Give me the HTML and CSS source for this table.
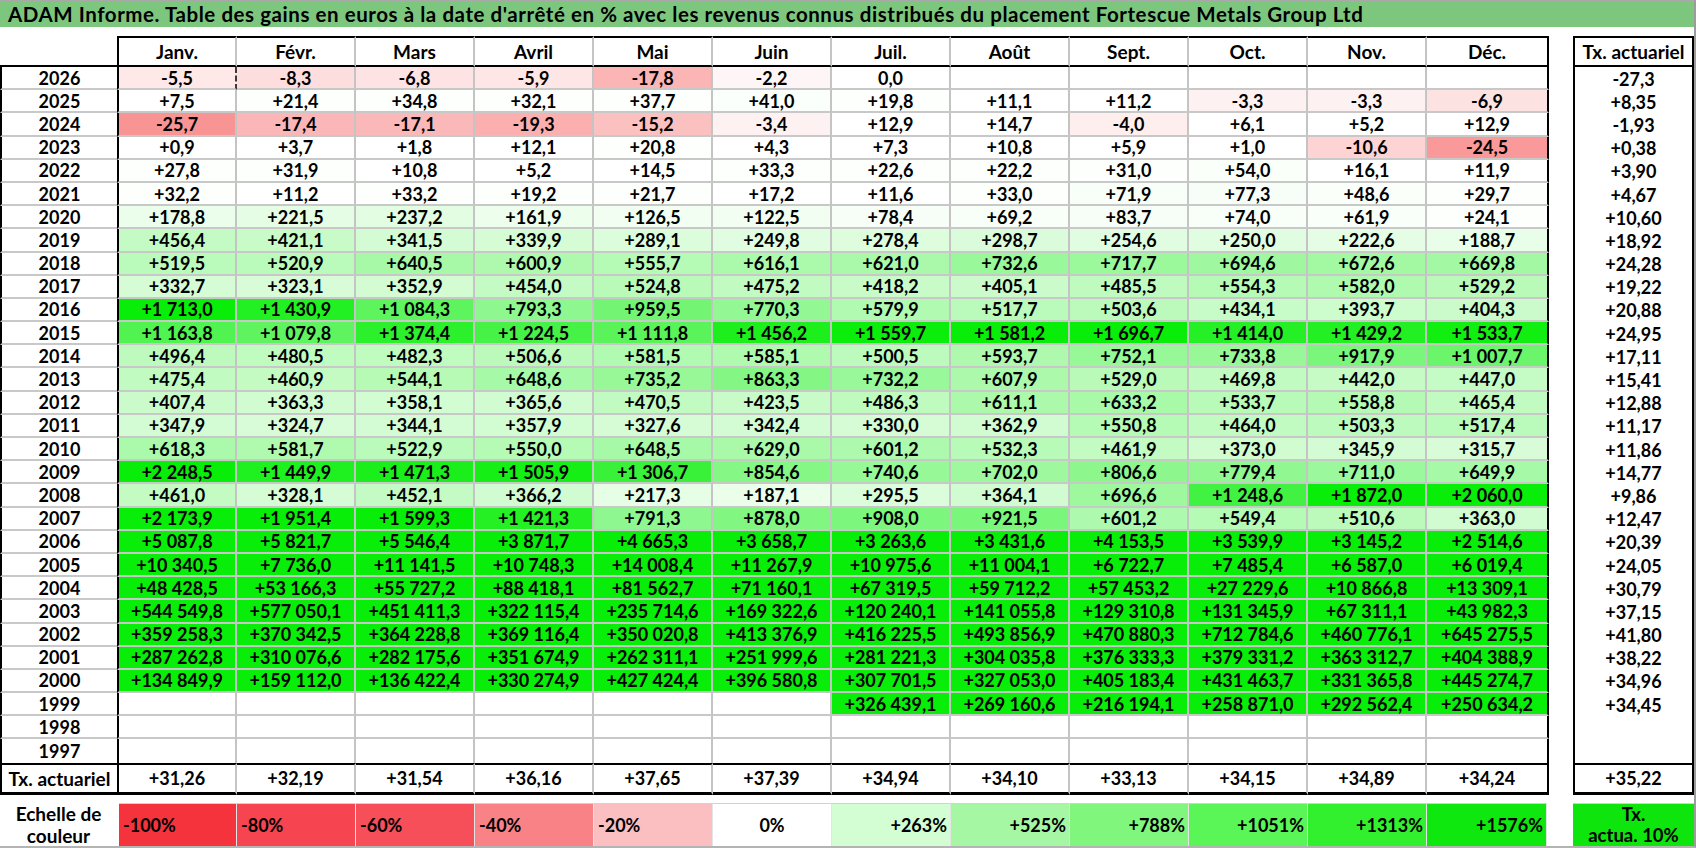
FILE: index.html
```html
<!DOCTYPE html>
<html lang="fr">
<head>
<meta charset="utf-8">
<title>ADAM Informe - Fortescue Metals Group Ltd</title>
<link rel="stylesheet" href="styles.css">
</head>
<body>
<div class="sheet">
  <div class="title">ADAM Informe. Table des gains en euros à la date d'arrêté en % avec les revenus connus distribués du placement Fortescue Metals Group Ltd</div>
  <div class="tables">
    <div class="main" id="main"></div>
    <div class="tx" id="tx"></div>
  </div>
  <div class="scale">
    <div class="scale-label">Echelle de<br>couleur</div>
    <div class="sw neg s1">-100%</div>
    <div class="sw neg s2">-80%</div>
    <div class="sw neg s3">-60%</div>
    <div class="sw neg s4">-40%</div>
    <div class="sw neg s5">-20%</div>
    <div class="sw zero s6">0%</div>
    <div class="sw pos s7">+263%</div>
    <div class="sw pos s8">+525%</div>
    <div class="sw pos s9">+788%</div>
    <div class="sw pos s10">+1051%</div>
    <div class="sw pos s11">+1313%</div>
    <div class="sw pos s12 swlast">+1576%</div>
    <div class="spacer"></div>
    <div class="sw-tx">Tx.<br>actua. 10%</div>
  </div>
</div>
<script src="script.js"></script>
</body>
</html>
```

FILE: styles.css
```css
* { box-sizing: border-box; }
html, body { margin: 0; padding: 0; background: #fff; }
body {
  font-family: Lato, "Open Sans", "Liberation Sans", sans-serif;
  font-weight: 700;
  color: #000;
}
.sheet {
  width: 1696px;
  height: 848px;
  border-top: 1px solid #a8a8a8;
  border-right: 2px solid #9c9c9c;
  border-bottom: 2px solid #b4b4b4;
  overflow: hidden;
}
.title {
  height: 26px;
  background: #7dc67e;
  font-size: 20.5px;
  letter-spacing: 0.56px;
  line-height: 26px;
  padding-left: 8px;
  white-space: nowrap;
}
.tables {
  display: flex;
  gap: 24px;
  margin-top: 9px;
}
.main {
  display: grid;
  grid-template-columns: 117px 120px repeat(10, 119px) 122px;
  grid-template-rows: 31px repeat(30, 23.2px) 32px;
}
.tx {
  display: grid;
  grid-template-columns: 121px;
  grid-template-rows: 31px repeat(30, 23.2px) 32px;
}
.cell {
  display: flex;
  align-items: center;
  justify-content: center;
  white-space: nowrap;
  font-size: 18px;
  background: #fff;
}
.corner { border-bottom: 2px solid #000; }
.hd {
  font-size: 19px;
  border-top: 2px solid #000;
  border-bottom: 2px solid #000;
  border-right: 2px solid #c4c4c4;
}
.first { border-left: 2px solid #000; }
.main .last { border-right: 2px solid #000; }
.yr {
  border-left: 2px solid #000;
  border-bottom: 2px solid #c8c8c8;
}
.c {
  border-right: 2px solid #c4c4c4;
  border-bottom: 2px solid #c8c8c8;
}
.main .pagebreak { border-right: 2px dashed #3a3a3a; }
.lastrow { border-bottom: none; }
.tot {
  border-top: 2px solid #000;
  border-bottom: 3px solid #000;
}
.yr.tot { font-size: 19px; border-bottom: 3px solid #000; }
.txc {
  border-left: 2px solid #000;
  border-right: 2px solid #000;
}
.txc.hd { border-top: 2px solid #000; border-bottom: 2px solid #000; }
.scale {
  display: grid;
  grid-template-columns: 117px 120px repeat(10, 119px) 122px 24px 121px;
  height: 43px;
  margin-top: 8px;
}
.scale-label {
  display: flex;
  align-items: center;
  justify-content: center;
  text-align: center;
  font-size: 19px;
  line-height: 22px;
}
.sw {
  display: flex;
  align-items: center;
  font-size: 18px;
  border-top: 1px solid #d2d2d2;
  border-right: 1px solid #e4e4e4;
  white-space: nowrap;
}
.s1 { margin-left: 2px; }
.neg { justify-content: flex-start; padding-left: 4px; }
.zero { justify-content: center; }
.pos { justify-content: flex-end; padding-right: 3px; }
.swlast { margin-right: 2px; }
.s1 { background: #f5333d; }
.s2 { background: #f64450; }
.s3 { background: #f74f59; }
.s4 { background: #f98287; }
.s5 { background: #fbbfc1; }
.s6 { background: #ffffff; }
.s7 { background: #d3fdd3; }
.s8 { background: #a6f7a3; }
.s9 { background: #80f77c; }
.s10 { background: #5af556; }
.s11 { background: #33f02f; }
.s12 { background: #0ee80e; }
.sw-tx {
  background: #0de50d;
  display: flex;
  align-items: center;
  justify-content: center;
  text-align: center;
  font-size: 18.5px;
  line-height: 21px;
  border-top: 1px solid #d2d2d2;
}
```

FILE: script.js
```js
(function () {
  var months = ["Janv.", "Févr.", "Mars", "Avril", "Mai", "Juin", "Juil.", "Août", "Sept.", "Oct.", "Nov.", "Déc."];
  var rows = [
    ["2026", "-5,5|-8,3|-6,8|-5,9|-17,8|-2,2|0,0|||||", "-27,3"],
    ["2025", "+7,5|+21,4|+34,8|+32,1|+37,7|+41,0|+19,8|+11,1|+11,2|-3,3|-3,3|-6,9", "+8,35"],
    ["2024", "-25,7|-17,4|-17,1|-19,3|-15,2|-3,4|+12,9|+14,7|-4,0|+6,1|+5,2|+12,9", "-1,93"],
    ["2023", "+0,9|+3,7|+1,8|+12,1|+20,8|+4,3|+7,3|+10,8|+5,9|+1,0|-10,6|-24,5", "+0,38"],
    ["2022", "+27,8|+31,9|+10,8|+5,2|+14,5|+33,3|+22,6|+22,2|+31,0|+54,0|+16,1|+11,9", "+3,90"],
    ["2021", "+32,2|+11,2|+33,2|+19,2|+21,7|+17,2|+11,6|+33,0|+71,9|+77,3|+48,6|+29,7", "+4,67"],
    ["2020", "+178,8|+221,5|+237,2|+161,9|+126,5|+122,5|+78,4|+69,2|+83,7|+74,0|+61,9|+24,1", "+10,60"],
    ["2019", "+456,4|+421,1|+341,5|+339,9|+289,1|+249,8|+278,4|+298,7|+254,6|+250,0|+222,6|+188,7", "+18,92"],
    ["2018", "+519,5|+520,9|+640,5|+600,9|+555,7|+616,1|+621,0|+732,6|+717,7|+694,6|+672,6|+669,8", "+24,28"],
    ["2017", "+332,7|+323,1|+352,9|+454,0|+524,8|+475,2|+418,2|+405,1|+485,5|+554,3|+582,0|+529,2", "+19,22"],
    ["2016", "+1 713,0|+1 430,9|+1 084,3|+793,3|+959,5|+770,3|+579,9|+517,7|+503,6|+434,1|+393,7|+404,3", "+20,88"],
    ["2015", "+1 163,8|+1 079,8|+1 374,4|+1 224,5|+1 111,8|+1 456,2|+1 559,7|+1 581,2|+1 696,7|+1 414,0|+1 429,2|+1 533,7", "+24,95"],
    ["2014", "+496,4|+480,5|+482,3|+506,6|+581,5|+585,1|+500,5|+593,7|+752,1|+733,8|+917,9|+1 007,7", "+17,11"],
    ["2013", "+475,4|+460,9|+544,1|+648,6|+735,2|+863,3|+732,2|+607,9|+529,0|+469,8|+442,0|+447,0", "+15,41"],
    ["2012", "+407,4|+363,3|+358,1|+365,6|+470,5|+423,5|+486,3|+611,1|+633,2|+533,7|+558,8|+465,4", "+12,88"],
    ["2011", "+347,9|+324,7|+344,1|+357,9|+327,6|+342,4|+330,0|+362,9|+550,8|+464,0|+503,3|+517,4", "+11,17"],
    ["2010", "+618,3|+581,7|+522,9|+550,0|+648,5|+629,0|+601,2|+532,3|+461,9|+373,0|+345,9|+315,7", "+11,86"],
    ["2009", "+2 248,5|+1 449,9|+1 471,3|+1 505,9|+1 306,7|+854,6|+740,6|+702,0|+806,6|+779,4|+711,0|+649,9", "+14,77"],
    ["2008", "+461,0|+328,1|+452,1|+366,2|+217,3|+187,1|+295,5|+364,1|+696,6|+1 248,6|+1 872,0|+2 060,0", "+9,86"],
    ["2007", "+2 173,9|+1 951,4|+1 599,3|+1 421,3|+791,3|+878,0|+908,0|+921,5|+601,2|+549,4|+510,6|+363,0", "+12,47"],
    ["2006", "+5 087,8|+5 821,7|+5 546,4|+3 871,7|+4 665,3|+3 658,7|+3 263,6|+3 431,6|+4 153,5|+3 539,9|+3 145,2|+2 514,6", "+20,39"],
    ["2005", "+10 340,5|+7 736,0|+11 141,5|+10 748,3|+14 008,4|+11 267,9|+10 975,6|+11 004,1|+6 722,7|+7 485,4|+6 587,0|+6 019,4", "+24,05"],
    ["2004", "+48 428,5|+53 166,3|+55 727,2|+88 418,1|+81 562,7|+71 160,1|+67 319,5|+59 712,2|+57 453,2|+27 229,6|+10 866,8|+13 309,1", "+30,79"],
    ["2003", "+544 549,8|+577 050,1|+451 411,3|+322 115,4|+235 714,6|+169 322,6|+120 240,1|+141 055,8|+129 310,8|+131 345,9|+67 311,1|+43 982,3", "+37,15"],
    ["2002", "+359 258,3|+370 342,5|+364 228,8|+369 116,4|+350 020,8|+413 376,9|+416 225,5|+493 856,9|+470 880,3|+712 784,6|+460 776,1|+645 275,5", "+41,80"],
    ["2001", "+287 262,8|+310 076,6|+282 175,6|+351 674,9|+262 311,1|+251 999,6|+281 221,3|+304 035,8|+376 333,3|+379 331,2|+363 312,7|+404 388,9", "+38,22"],
    ["2000", "+134 849,9|+159 112,0|+136 422,4|+330 274,9|+427 424,4|+396 580,8|+307 701,5|+327 053,0|+405 183,4|+431 463,7|+331 365,8|+445 274,7", "+34,96"],
    ["1999", "||||||+326 439,1|+269 160,6|+216 194,1|+258 871,0|+292 562,4|+250 634,2", "+34,45"],
    ["1998", "|||||||||||", ""],
    ["1997", "|||||||||||", ""]
  ];
  var totals = ["+31,26", "+32,19", "+31,54", "+36,16", "+37,65", "+37,39", "+34,94", "+34,10", "+33,13", "+34,15", "+34,89", "+34,24"];
  var totalTx = "+35,22";

  function num(s) {
    if (!s) return null;
    return parseFloat(s.replace(/\s/g, "").replace(",", "."));
  }
  function colour(v) {
    if (v === null || isNaN(v)) return "";
    var r, g, b, t;
    if (v < 0) {
      t = Math.min(1, -v / 26);
      r = 255 - 6 * t; g = 255 - 108 * t; b = 255 - 108 * t;
    } else {
      t = Math.pow(Math.min(1, v / 1576), 1.15);
      r = 255 - 247 * t; g = 255 - 17 * t; b = 255 - 247 * t;
    }
    return "rgb(" + Math.round(r) + "," + Math.round(g) + "," + Math.round(b) + ")";
  }
  function show(s) { return s.replace(/ /g, "\u00a0"); }
  function cell(parent, cls, text) {
    var d = document.createElement("div");
    d.className = "cell " + cls;
    if (text) d.textContent = show(text);
    parent.appendChild(d);
    return d;
  }
  function colCls(i) { return i === 0 ? " first" : (i === 11 ? " last" : ""); }

  var main = document.getElementById("main");
  var tx = document.getElementById("tx");

  cell(main, "corner", "");
  months.forEach(function (m, i) { cell(main, "hd" + colCls(i), m); });
  cell(tx, "txc hd", "Tx. actuariel");

  rows.forEach(function (row, ri) {
    var last = ri === rows.length - 1 ? " lastrow" : "";
    cell(main, "yr" + last, row[0]);
    row[1].split("|").forEach(function (s, i) {
      var extra = (ri === 0 && i === 0) ? " pagebreak" : "";
      var d = cell(main, "c" + colCls(i) + last + extra, s);
      var c = colour(num(s));
      if (c) d.style.backgroundColor = c;
    });
    cell(tx, "txc", row[2]);
  });

  cell(main, "yr tot", "Tx. actuariel");
  totals.forEach(function (s, i) { cell(main, "c tot" + colCls(i), s); });
  cell(tx, "txc tot", totalTx);
})();
```
